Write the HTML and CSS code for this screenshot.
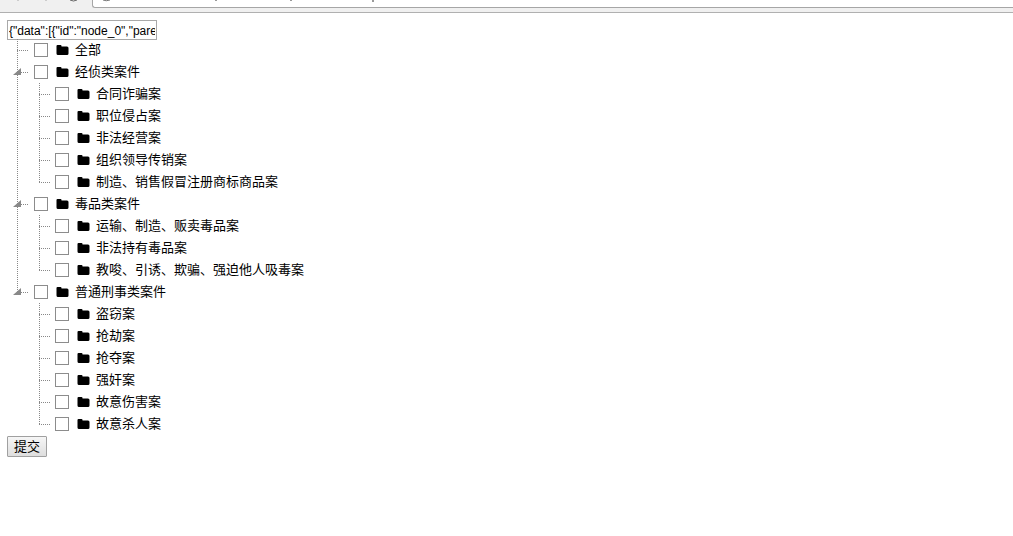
FILE: index.html
```html
<!DOCTYPE html>
<html lang="zh-CN">

<head>
    <meta charset="UTF-8">
    <meta name="viewport" content="width=device-width, initial-scale=1.0">
    <title>案件类别</title>
    <link rel="stylesheet" href="styles.css">
</head>

<body>
    <svg class="symbols" aria-hidden="true">
        <symbol id="folder" viewBox="0 0 13 12">
            <path d="M0.500 2Q0.500 1 1.500 1H4.500Q5.500 1 5.500 2V2.500H11Q12.500 2.500 12.500 4V9.500Q12.500 11 11 11H2Q0.500 11 0.500 9.500Z"/>
        </symbol>
    </svg>

    <header class="toolbar">
        <svg class="toolbar-icons" viewBox="0 0 92 12" aria-hidden="true">
            <path d="M17 0h2v1h-2zM45 0h2v1h-2z" fill="#ccc"/>
            <path d="M70 0Q73.500 2 77 0" fill="none" stroke="#666" stroke-width="1"/>
        </svg>
        <div class="address">
            <svg class="address-marks" viewBox="0 0 300 7" aria-hidden="true">
                <path d="M10 0Q13 1.500 17 0" fill="none" stroke="#777"/>
                <path d="M122 0h2v1h-2zM197 0h2v1h-2zM279 0h2v2h-2z" fill="#9a9a9a"/>
            </svg>
        </div>
    </header>

    <form class="case-form">
        <input type="text" class="data" id="data" aria-label="data" value='{"data":[{"id":"node_0","parent":"#","text":"全部"}]}'>
        <ul class="tree" id="tree"></ul>
        <button type="button" class="submit">提交</button>
    </form>

    <script>
        var nodes = [
            { text: '全部' },
            { text: '经侦类案件', children: ['合同诈骗案', '职位侵占案', '非法经营案', '组织领导传销案', '制造、销售假冒注册商标商品案'] },
            { text: '毒品类案件', children: ['运输、制造、贩卖毒品案', '非法持有毒品案', '教唆、引诱、欺骗、强迫他人吸毒案'] },
            { text: '普通刑事类案件', children: ['盗窃案', '抢劫案', '抢夺案', '强奸案', '故意伤害案', '故意杀人案'] }
        ];

        function nodeHtml(text, children) {
            var toggle = children
                ? '<button type="button" class="branch toggle" aria-label="展开"><svg viewBox="0 0 8 8"><path d="M8 0V7H0Z"/></svg></button>'
                : '<span class="branch"></span>';
            var html = '<li class="node"><div class="row">' + toggle +
                '<label class="item"><input type="checkbox" class="check">' +
                '<svg class="folder"><use href="#folder"/></svg>' + text + '</label></div>';
            if (children) {
                html += '<ul class="children">' + children.map(function (name) {
                    return nodeHtml(name);
                }).join('') + '</ul>';
            }
            return html + '</li>';
        }

        var tree = document.getElementById('tree');
        tree.innerHTML = nodes.map(function (node) {
            return nodeHtml(node.text, node.children);
        }).join('');

        // 展开 / 收起
        tree.addEventListener('click', function (e) {
            var toggle = e.target.closest('.toggle');
            if (toggle) {
                toggle.closest('.node').classList.toggle('closed');
            }
        });
    </script>
</body>

</html>
```

FILE: styles.css
```css
body {
    margin: 0;
    background: #fff;
    color: #000;
    font-family: "Liberation Sans", "Noto Sans CJK SC", sans-serif;
    font-size: 13px;
}

.symbols {
    display: none;
}

.toolbar {
    display: flex;
    height: 12px;
    background: #f0f0f0;
    border-bottom: 1px solid #b0b0b0;
}

.toolbar-icons {
    flex: none;
    width: 92px;
    height: 12px;
}

.address {
    flex: 1;
    height: 7px;
    background: #fff;
    border: solid #a6a6a6;
    border-width: 0 0 1px 1px;
    border-bottom-left-radius: 3px;
}

.address-marks {
    display: block;
    width: 300px;
    height: 7px;
}

.case-form {
    padding: 7px;
}

.data {
    display: block;
    box-sizing: border-box;
    width: 150px;
    height: 20px;
    padding: 0 1px 2px;
    border: 1px solid #a9a9a9;
    font-family: "Liberation Sans", sans-serif;
    font-size: 12px;
}

.tree,
.children {
    margin: 0;
    padding: 0;
    list-style: none;
}

.tree {
    --line: 10px;
    margin: -1px 0 1px;
}

.children {
    --line: 11px;
    padding-left: 21px;
}

/* dotted vertical line, it stops at the last node's row */
.node {
    background: repeating-linear-gradient(#888 0 1px, transparent 1px 2px) var(--line) 0 / 1px 100% no-repeat;
}

.node:last-child {
    background-size: 1px 12px;
}

.closed .children {
    display: none;
}

.row {
    display: flex;
    align-items: center;
    gap: 5px;
    height: 22px;
}

.branch {
    width: 22px;
    height: 22px;
    box-sizing: border-box;
    padding: 0 0 0 6px;
    border: none;
    background: repeating-linear-gradient(90deg, #888 0 1px, transparent 1px 2px) var(--line) 11px / 12px 1px no-repeat;
}

.toggle {
    display: flex;
    align-items: center;
    cursor: pointer;
}

.toggle svg {
    width: 8px;
    height: 8px;
    fill: #888;
}

.item {
    display: flex;
    align-items: center;
    line-height: 22px;
    white-space: nowrap;
}

.check {
    appearance: none;
    box-sizing: border-box;
    width: 14px;
    height: 14px;
    margin: 0 8px 0 0;
    border: 1px solid #8c8c8c;
    background: #fff;
}

.check:checked {
    background: #8c8c8c;
    box-shadow: inset 0 0 0 2px #fff;
}

.folder {
    width: 13px;
    height: 12px;
    margin-right: 6px;
}

.submit {
    display: block;
    height: 21px;
    padding: 0 6px;
    border: 1px solid #a0a0a0;
    border-radius: 1px;
    background: linear-gradient(#f6f6f6, #dedede);
    color: #000;
    font-family: inherit;
    font-size: 13px;
    line-height: 19px;
}
```
